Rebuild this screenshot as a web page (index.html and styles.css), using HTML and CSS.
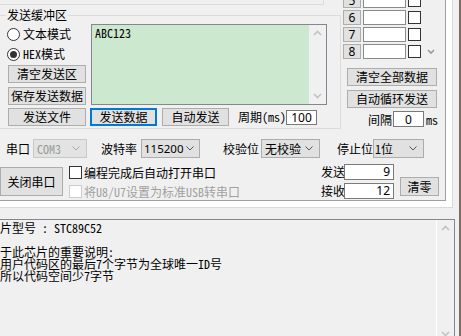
FILE: index.html
```html
<!DOCTYPE html>
<html lang="zh-CN">
<head>
<meta charset="utf-8">
<title>STC-ISP</title>
<link rel="stylesheet" href="styles.css">
</head>
<body>
<div class="app">
  <div class="main">
    <div class="frame">
      <div class="page">
        <div class="upper">
          <div class="left">
            <div class="rx-edge"></div>
            <fieldset class="sendbuf">
              <legend>发送缓冲区</legend>
              <div class="sb-body">
                <div class="sb-modes">
                  <div class="radio"><span class="rb"></span>文本模式</div>
                  <div class="radio"><span class="rb on"></span>HEX模式</div>
                  <button class="btn side first">清空发送区</button>
                  <button class="btn side">保存发送数据</button>
                </div>
                <div class="txbox">
                  <div class="txtext">ABC123</div>
                  <div class="vscroll">
                    <svg class="arr" width="17" height="17" viewBox="0 0 17 17"><polyline points="5,10 8.5,6.5 12,10"/></svg>
                    <svg class="arr" width="17" height="17" viewBox="0 0 17 17"><polyline points="5,7 8.5,10.5 12,7"/></svg>
                  </div>
                </div>
              </div>
              <div class="sb-actions">
                <button class="btn act w78">发送文件</button>
                <button class="btn act w67 focus">发送数据</button>
                <button class="btn act w67 ml5">自动发送</button>
                <span class="period">周期(ms)</span>
                <span class="field num inp100">100</span>
              </div>
            </fieldset>
          </div>
          <div class="multi">
            <div class="mrows">
              <div class="mlist">
                <div class="mrow"><span class="nbtn">5</span><span class="nfield"></span><span class="ncheck"></span></div>
                <div class="mrow"><span class="nbtn">6</span><span class="nfield"></span><span class="ncheck"></span></div>
                <div class="mrow"><span class="nbtn">7</span><span class="nfield"></span><span class="ncheck"></span></div>
                <div class="mrow"><span class="nbtn">8</span><span class="nfield"></span><span class="ncheck"></span>
                  <svg class="mchev" width="8" height="6" viewBox="0 0 8 6"><polyline points="1,1 4,4 7,1"/></svg>
                </div>
              </div>
            </div>
            <button class="btn mbtn">清空全部数据</button>
            <button class="btn mbtn second">自动循环发送</button>
            <div class="interval">
              <span>间隔</span>
              <span class="field num inp0">0</span>
              <span class="ms">ms</span>
            </div>
          </div>
        </div>
        <div class="config">
          <div class="rowA">
            <span class="lbl l-port">串口</span>
            <span class="combo dis c-port"><span>COM3</span><svg width="8" height="5" viewBox="0 0 8 5"><polyline points="0.5,0.5 4,4 7.5,0.5"/></svg></span>
            <span class="lbl l-baud">波特率</span>
            <span class="combo c-baud"><span class="num">115200</span><svg width="8" height="5" viewBox="0 0 8 5"><polyline points="0.5,0.5 4,4 7.5,0.5"/></svg></span>
            <span class="lbl l-par">校验位</span>
            <span class="combo c-par"><span>无校验</span><svg width="8" height="5" viewBox="0 0 8 5"><polyline points="0.5,0.5 4,4 7.5,0.5"/></svg></span>
            <span class="lbl l-stop">停止位</span>
            <span class="combo c-stop"><span>1位</span><svg width="8" height="5" viewBox="0 0 8 5"><polyline points="0.5,0.5 4,4 7.5,0.5"/></svg></span>
          </div>
          <div class="rowB">
            <button class="btn closebtn">关闭串口</button>
            <div class="checks">
              <div class="chk"><span class="cbox"></span>编程完成后自动打开串口</div>
              <div class="chk dis"><span class="cbox"></span>将U8/U7设置为标准USB转串口</div>
            </div>
            <div class="counters">
              <div class="crow"><span class="clbl">发送</span><span class="field num cval">9</span></div>
              <div class="crow second"><span class="clbl">接收</span><span class="field num cval">12</span></div>
            </div>
            <button class="btn zero">清零</button>
          </div>
        </div>
      </div>
    </div>
    <div class="output">
      <div class="otext"><div class="oline">片型号 : STC89C52</div><div class="oline"> </div><div class="oline">于此芯片的重要说明:</div><div class="oline">用户代码区的最后7个字节为全球唯一ID号</div><div class="oline">所以代码空间少7字节</div></div>
      <div class="oscroll">
        <svg class="arr" width="17" height="17" viewBox="0 0 17 17"><polyline points="5,10 8.5,6.5 12,10"/></svg>
        <svg class="arr" width="17" height="17" viewBox="0 0 17 17"><polyline points="5,7 8.5,10.5 12,7"/></svg>
      </div>
    </div>
  </div>
  <div class="edge"></div>
</div>
</body>
</html>
```

FILE: styles.css
```css
* { box-sizing: border-box; }
html, body { margin: 0; padding: 0; }
body {
  background: #f0f0f0;
  width: 461px;
  height: 336px;
  overflow: hidden;
  font-family: "Noto Sans Mono CJK SC", "Noto Sans CJK SC", monospace;
  font-size: 12px;
  color: #000;
}
.app { display: flex; width: 461px; height: 336px; overflow: hidden; }
.main { width: 459px; display: flex; flex-direction: column; }
.edge { width: 2px; background: #7d6c60; }

.frame {
  width: 453px; height: 208px; flex: none;
  background: #fff;
  border-right: 1px solid #d9d9d9;
  border-bottom: 1px solid #d9d9d9;
  padding: 0 6px 6px 0;
}
.page {
  width: 446px; height: 201px;
  background: #f0f0f0;
  border-right: 1px solid #a0a0a0;
  border-bottom: 1px solid #a0a0a0;
}

.btn {
  font: inherit;
  color: #000;
  background: #e1e1e1;
  border: 1px solid #adadad;
  padding: 0;
  margin: 0;
  line-height: 14px;
  white-space: nowrap;
}
.num { font-family: "Noto Sans", "DejaVu Sans", sans-serif; }
.field {
  background: #fff;
  border: 1px solid #7a7a7a;
  display: flex;
  align-items: center;
}

/* ---- upper ---- */
.upper { display: flex; height: 129px; }
.left { width: 341px; flex: none; }
.rx-edge {
  width: 324px; height: 5px;
  border-bottom: 1px solid #dcdcdc;
  border-right: 1px solid #dcdcdc;
}
.sendbuf {
  margin: 3px 0 0 -1px;
  width: 342px; height: 121px;
  border: 1px solid #dcdcdc;
  padding: 0;
  min-width: 0;
}
.sendbuf legend {
  margin-left: 6px;
  padding: 0 1px;
  height: 14px;
  line-height: 14px;
}
.sb-body { display: flex; padding-top: 2px; }
.sb-modes { width: 86px; display: flex; flex-direction: column; }
.radio { height: 20px; display: flex; align-items: center; padding-left: 7px; line-height: 14px; }
.rb {
  width: 13px; height: 13px;
  border: 1px solid #333;
  border-radius: 50%;
  background: #fff;
  margin-right: 3px;
  display: flex; align-items: center; justify-content: center;
}
.rb.on::after { content: ""; width: 7px; height: 7px; border-radius: 50%; background: #333; }
.side { width: 78px; height: 18px; margin: 4px 0 0 8px; }
.side.first { margin-top: 1px; }
.txbox {
  margin-left: 5px;
  width: 236px; height: 81px;
  border: 1px solid #828790;
  background: #cce8cf;
  display: flex;
}
.txtext { flex: 1; padding: 2px 3px; line-height: 12px; }
.vscroll {
  width: 17px;
  background: #f0f0f0;
  display: flex; flex-direction: column; justify-content: space-between;
}
.arr polyline { fill: none; stroke: #c2c2c2; stroke-width: 1.6; }
.sb-actions { display: flex; align-items: flex-start; margin-top: 3px; padding-left: 8px; }
.act { height: 18px; }
.w78 { width: 78px; }
.w67 { width: 67px; }
.focus { margin-left: 4px; border: 2px solid #0078d7; }
.ml5 { margin-left: 5px; }
.period { margin-left: 9px; line-height: 18px; }
.inp100 { margin-top: 2px; width: 31px; height: 15px; justify-content: center; }

/* ---- multi string panel ---- */
.multi { width: 104px; flex: none; }
.mrows { height: 61px; overflow: hidden; }
.mlist { margin-top: -7px; }
.mrow { display: flex; align-items: center; height: 15px; margin-bottom: 2px; padding-left: 2px; }
.nbtn {
  width: 18px; height: 15px;
  background: #e1e1e1;
  border: 1px solid #adadad;
  text-align: center;
  line-height: 13px;
  font-family: "Noto Sans", "DejaVu Sans", sans-serif;
}
.nfield { margin-left: 2px; width: 43px; height: 15px; background: #fff; border: 1px solid #8a8a8a; }
.ncheck { margin-left: 2px; width: 13px; height: 13px; background: #fff; border: 1px solid #333; }
.mchev { margin-left: 6px; }
.mchev polyline { fill: none; stroke: #9a9a9a; stroke-width: 1.6; }
.mbtn { display: block; width: 90px; height: 18px; margin: 7px 0 0 6px; }
.mbtn.second { margin-top: 4px; }
.interval { display: flex; align-items: center; margin-top: 3px; padding-left: 27px; height: 16px; }
.inp0 { margin-left: 1px; width: 31px; height: 16px; justify-content: center; }
.ms { margin-left: 2px; }

/* ---- config ---- */
.config { padding-top: 10px; }
.rowA { display: flex; align-items: center; height: 19px; }
.lbl { white-space: nowrap; }
.l-port { margin-left: 6px; width: 24px; }
.l-baud { margin-left: 14px; width: 36px; }
.l-par { margin-left: 23px; width: 36px; }
.l-stop { margin-left: 17px; width: 36px; }
.combo {
  height: 19px;
  background: #e1e1e1;
  border: 1px solid #adadad;
  display: flex; align-items: center; justify-content: space-between;
  padding: 0 6px 0 3px;
}
.combo svg { flex: none; }
.combo svg polyline { fill: none; stroke: #555; stroke-width: 1; }
.combo.dis { background: #e3e3e3; border-color: #c8c8c8; color: #9a9a9a; }
.combo.dis svg polyline { stroke: #a8a8a8; }
.c-port { margin-left: 3px; width: 54px; }
.c-baud { margin-left: 4px; width: 59px; padding: 0 5px 0 2px; }
.c-baud .num { font-size: 11.5px; }
.c-par { margin-left: 2px; width: 59px; }
.c-stop { width: 51px; padding-left: 1px; }

.rowB { display: flex; align-items: flex-start; margin-top: 5px; }
.closebtn { margin-top: 4px; width: 63px; height: 29px; }
.checks { margin-left: 6px; width: 252px; }
.chk { display: flex; align-items: center; height: 13px; margin-top: 3px; white-space: nowrap; }
.chk.dis { margin-top: 6px; color: #a0a0a0; }
.cbox { width: 13px; height: 13px; border: 1px solid #333; background: #fff; margin-right: 2px; flex: none; }
.chk.dis .cbox { border-color: #cccccc; }
.counters { width: 73px; }
.crow { display: flex; align-items: center; }
.crow.second { margin-top: 2px; }
.clbl { width: 23px; white-space: nowrap; }
.cval { width: 51px; height: 16px; justify-content: flex-end; padding-right: 3px; }
.zero { margin: 14px 0 0 6px; width: 39px; height: 19px; }

/* ---- output ---- */
.output {
  flex: none;
  margin-top: 11px;
  width: 455px; height: 123px;
  border-top: 1px solid #828790;
  border-right: 1px solid #828790;
  background: #f0f0f0;
  display: flex;
}
.otext { flex: 1; padding-top: 2px; line-height: 12px; white-space: pre; overflow: hidden; }
.oline { height: 12px; }
.oscroll {
  width: 18px;
  border-left: 1px solid #fff;
  display: flex; flex-direction: column; justify-content: space-between;
}
```
